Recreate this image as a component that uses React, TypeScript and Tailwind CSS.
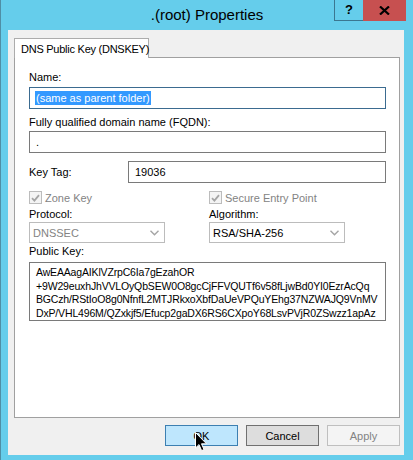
import type { ReactNode } from 'react';

const font = { fontFamily: '"Segoe UI", "Liberation Sans", Arial, sans-serif' };

const keyLines = [
  'AwEAAagAIKlVZrpC6Ia7gEzahOR',
  '+9W29euxhJhVVLOyQbSEW0O8gcCjFFVQUTf6v58fLjwBd0YI0EzrAcQq',
  'BGCzh/RStIoO8g0NfnfL2MTJRkxoXbfDaUeVPQuYEhg37NZWAJQ9VnMV',
  'DxP/VHL496M/QZxkjf5/Efucp2gaDX6RS6CXpoY68LsvPVjR0ZSwzz1apAz',
];

const Label = ({ children, className = '' }: { children: ReactNode; className?: string }) => (
  <div className={`h-[14px] whitespace-nowrap text-[11px] leading-[14px] text-black ${className}`}>{children}</div>
);

const DisabledCheck = ({ label }: { label: string }) => (
  <div className="flex h-[13px] items-center">
    <span className="flex h-[13px] w-[13px] items-center justify-center border border-[#bcbcbc] bg-[#f4f4f4]">
      <svg width="9" height="8" viewBox="0 0 9 8">
        <path d="M1 4.2 L3.4 6.6 L8 1.2" fill="none" stroke="#a5a5a5" strokeWidth="1.8" />
      </svg>
    </span>
    <span className="ml-[3px] text-[11px] leading-[14px] text-[#838383]">{label}</span>
  </div>
);

const Combo = ({ value, disabled }: { value: string; disabled?: boolean }) => (
  <div className="flex h-[21px] w-[136px] items-center justify-between border border-[#bcbcbc] bg-white pl-[3px] pr-[5px]">
    <span className={`text-[11px] leading-[14px] ${disabled ? 'text-[#838383]' : 'text-black'}`}>{value}</span>
    <svg width="9" height="6" viewBox="0 0 9 6">
      <path d="M0.5 0.8 L4.5 4.8 L8.5 0.8" fill="none" stroke="#a5a5a5" strokeWidth="1.4" />
    </svg>
  </div>
);

const Button = ({ children, variant }: { children: ReactNode; variant: 'hover' | 'default' | 'disabled' }) => {
  const styles = {
    hover: 'border-[#3c7fb1] bg-[#bee6fd] text-black',
    default: 'border-[#707070] bg-[#dddddd] text-black',
    disabled: 'border-[#bfbfbf] bg-[#f4f4f4] text-[#838383]',
  }[variant];
  return (
    <div className={`flex h-[21px] w-[73px] items-center justify-center border text-[11px] leading-[14px] ${styles}`}>
      {children}
    </div>
  );
};

export default function App() {
  return (
    <div
      className="relative flex h-[460px] w-[413px] flex-col border-l border-[#4f8ea5] bg-[#65cdeb]"
      style={font}
    >
      {/* title bar */}
      <div className="relative h-[30px] shrink-0">
        <div className="pt-[6px] text-center text-[15px] leading-[18px] text-black">.(root) Properties</div>
        <div className="absolute right-[7px] top-0 flex h-[21px]">
          <div className="flex w-[29px] items-center justify-center border-b border-l border-[#3b7790] text-[13px] font-bold text-black">
            ?
          </div>
          <div className="flex w-[43px] items-center justify-center bg-[#c75050]">
            <svg width="11" height="9" viewBox="0 0 11 9">
              <path d="M1 0.5 L10 8.5 M10 0.5 L1 8.5" stroke="#000" strokeWidth="2.2" />
            </svg>
          </div>
        </div>
      </div>

      {/* client area */}
      <div className="ml-[7px] flex h-[425px] w-[396px] flex-col bg-[#f0f0f0] pl-[6px] pt-[8px]">
        <div className="relative z-10 flex h-[20px] w-[135px] items-center whitespace-nowrap border border-b-0 border-[#acacac] bg-white pl-[6px] text-[11px] leading-[14px] tracking-[-0.25px] text-black">
          DNS Public Key (DNSKEY)
        </div>
        <div className="-mt-[1px] flex h-[361px] w-[386px] flex-col border border-[#a0a0a0] bg-white pl-[14px]">
          <Label className="mt-[12px]">Name:</Label>
          <div className="mt-[3px] flex h-[22px] w-[357px] items-center border border-[#3b6b90] bg-white pl-[5px]">
            <span className="bg-[#3399ff] px-[1px] text-[11px] leading-[14px] text-white">(same as parent folder)</span>
          </div>

          <Label className="mt-[6px]">Fully qualified domain name (FQDN):</Label>
          <div className="mt-[2px] flex h-[22px] w-[357px] items-center border border-[#7a7a7a] bg-white pl-[6px] text-[11px] leading-[14px] text-black">
            .
          </div>

          <div className="mt-[8px] flex h-[22px] items-center">
            <span className="w-[99px] text-[11px] leading-[14px] text-black">Key Tag:</span>
            <div className="flex h-[22px] w-[258px] items-center border border-[#7a7a7a] bg-white pl-[6px] text-[11px] leading-[14px] text-black">
              19036
            </div>
          </div>

          <div className="mt-[8px] grid grid-cols-[180px_1fr]">
            <DisabledCheck label="Zone Key" />
            <DisabledCheck label="Secure Entry Point" />
          </div>

          <div className="mt-[3px] grid grid-cols-[180px_1fr]">
            <div>
              <Label>Protocol:</Label>
              <div className="mt-[1px]">
                <Combo value="DNSSEC" disabled />
              </div>
            </div>
            <div>
              <Label>Algorithm:</Label>
              <div className="mt-[1px]">
                <Combo value="RSA/SHA-256" />
              </div>
            </div>
          </div>

          <Label className="mt-[1px]">Public Key:</Label>
          <div className="mt-[4px] flex h-[59px] w-[357px] flex-col border border-[#7a7a7a] bg-white pl-[6px] pt-[3px] text-[10.5px] leading-[13.6px] tracking-[-0.16px] text-black">
            {keyLines.map((line) => (
              <div key={line} className="whitespace-nowrap">
                {line}
              </div>
            ))}
          </div>
        </div>

        <div className="mt-[7px] flex w-[386px] justify-end gap-[8px]">
          <Button variant="hover">OK</Button>
          <Button variant="default">Cancel</Button>
          <Button variant="disabled">Apply</Button>
        </div>
      </div>

      {/* mouse pointer */}
      <svg className="absolute left-[194px] top-[432px]" width="13" height="20" viewBox="0 0 13 20">
        <path
          d="M0.5 0.5 L0.5 16 L4 12.6 L6.6 18.6 L9 17.6 L6.5 11.8 L11.5 11.8 Z"
          fill="#000"
          stroke="#fff"
          strokeWidth="1"
          strokeLinejoin="miter"
        />
      </svg>
    </div>
  );
}
